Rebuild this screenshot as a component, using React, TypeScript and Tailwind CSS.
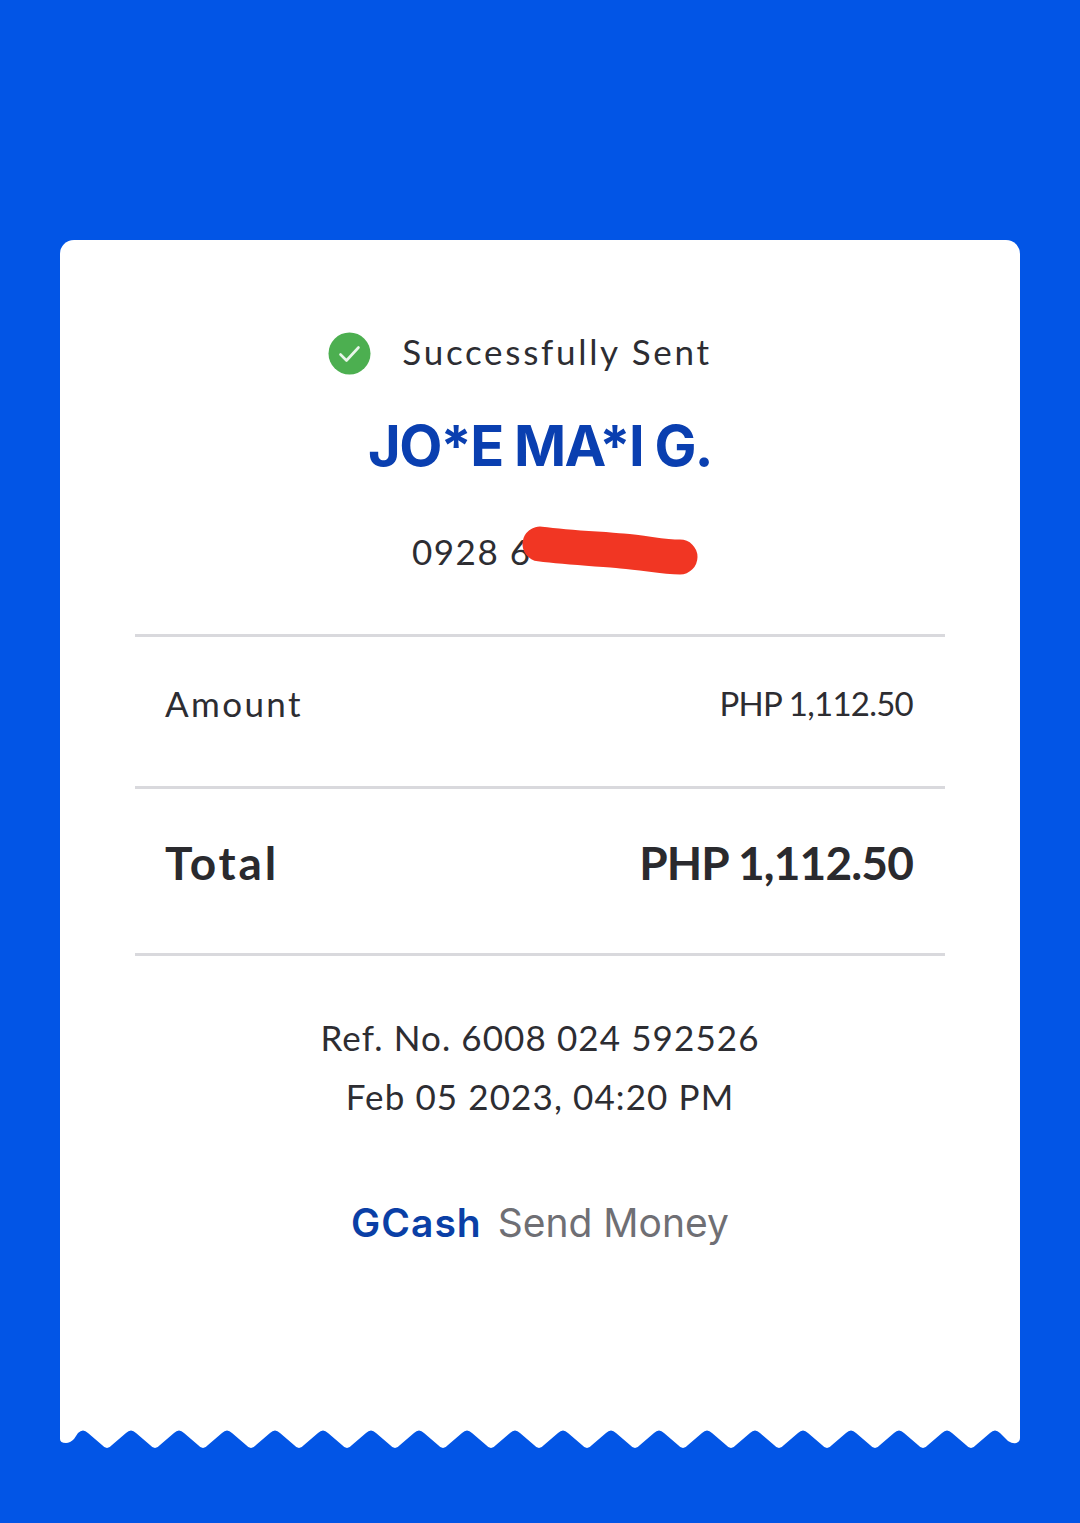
import React from 'react';

const bodyFont = { fontFamily: '"Lato", "Liberation Sans", sans-serif' };

function CheckBadge() {
  return (
    <svg width="43" height="43" viewBox="0 0 43 43" className="shrink-0">
      <circle cx="21.5" cy="21.5" r="21" fill="#4caf50" />
      <path d="M12.5 22.5 L18.5 28.5 L30.5 15.5" fill="none" stroke="#e9f6ea" strokeWidth="2.6" strokeLinecap="round" strokeLinejoin="round" />
    </svg>
  );
}

function Scribble() {
  return (
    <svg width="176" height="50" viewBox="0 0 176 50" className="absolute left-[110px] top-[-5px]">
      <path d="M18 18 C 50 22, 80 23, 100 25 C 125 27, 140 31, 158 31" fill="none" stroke="#f13623" strokeWidth="35" strokeLinecap="round" strokeLinejoin="round" />
    </svg>
  );
}

function TornEdge() {
  const teeth: string[] = [];
  for (let i = 0; i < 19; i++) {
    const peak = 23 + i * 48;
    teeth.push(`L ${peak - 5} 3 Q ${peak} -2 ${peak + 5} 3 L ${peak + 19} 15 Q ${peak + 24} 21 ${peak + 29} 15`);
  }
  const d = `M0 0 L0 9 Q0 13 6 13 Q10 13 14 9 ${teeth.join(' ')} L 930 3 Q 935 -2 940 3 L 948 11 Q 953 14 956 13 Q 960 12 960 8 L960 0 Z`;
  return (
    <svg width="960" height="20" viewBox="0 0 960 20" className="block">
      <path d={d} fill="#ffffff" />
    </svg>
  );
}

export default function App() {
  return (
    <div className="h-[1523px] w-[1080px] overflow-hidden bg-[#0255e6] pt-[240px]">
      <div className="mx-[60px] w-[960px]">
        <div className="h-[1190px] rounded-t-[14px] bg-white px-[75px] pt-[92px]" style={bodyFont}>
          <div className="flex h-[43px] items-center justify-center pr-[40px] text-[#2d2d32]">
            <div className="flex items-center gap-[31px] text-[35px] tracking-[2.7px]">
              <CheckBadge />
              <span className="pb-[4px]">Successfully Sent</span>
            </div>
          </div>

          <h1 className="mt-[39px] text-center text-[56px] leading-[64px] font-bold tracking-[-1.7px] text-[#0a3fb0]" style={{ fontFamily: '"Inter", sans-serif' }}>
            JO*E MA*I G.
          </h1>

          <div className="mt-[53px] flex justify-center">
            <div className="relative h-[40px] w-[256px] text-[35px] leading-[40px] tracking-[1.5px] text-[#2d2d32]">
              0928 6
              <Scribble />
            </div>
          </div>

          <div className="mt-[63px] h-[152px] border-t-[3px] border-[#d9d9dd]">
            <div className="flex h-[133px] items-center justify-between pr-[32px] pl-[30px] text-[35px] tracking-[2.4px] text-[#2d2d32]">
              <span>Amount</span>
              <span className="text-[33px] tracking-[-0.75px]">PHP 1,112.50</span>
            </div>
          </div>

          <div className="h-[167px] border-t-[3px] border-[#d9d9dd]">
            <div className="flex h-[146px] items-center justify-between pr-[32px] pl-[30px] text-[46px] font-bold text-[#2a2a2e]">
              <span className="tracking-[2.8px]">Total</span>
              <span className="tracking-[-0.85px]">PHP 1,112.50</span>
            </div>
          </div>

          <div className="border-t-[3px] border-[#d9d9dd] pt-[52px] text-center text-[35px] leading-[59px] tracking-[1.1px] text-[#2d2d32]">
            <p>Ref. No. 6008 024 592526</p>
            <p>Feb 05 2023, 04:20 PM</p>
          </div>

          <div className="mt-[75px] flex items-center justify-center gap-[16px] text-[39px] leading-[44px]" style={{ fontFamily: '"Inter", sans-serif' }}>
            <span className="font-semibold tracking-[1px] text-[#0a3fa6]">GCash</span>
            <span className="text-[#6f6f74]">Send Money</span>
          </div>
        </div>
        <TornEdge />
      </div>
    </div>
  );
}
